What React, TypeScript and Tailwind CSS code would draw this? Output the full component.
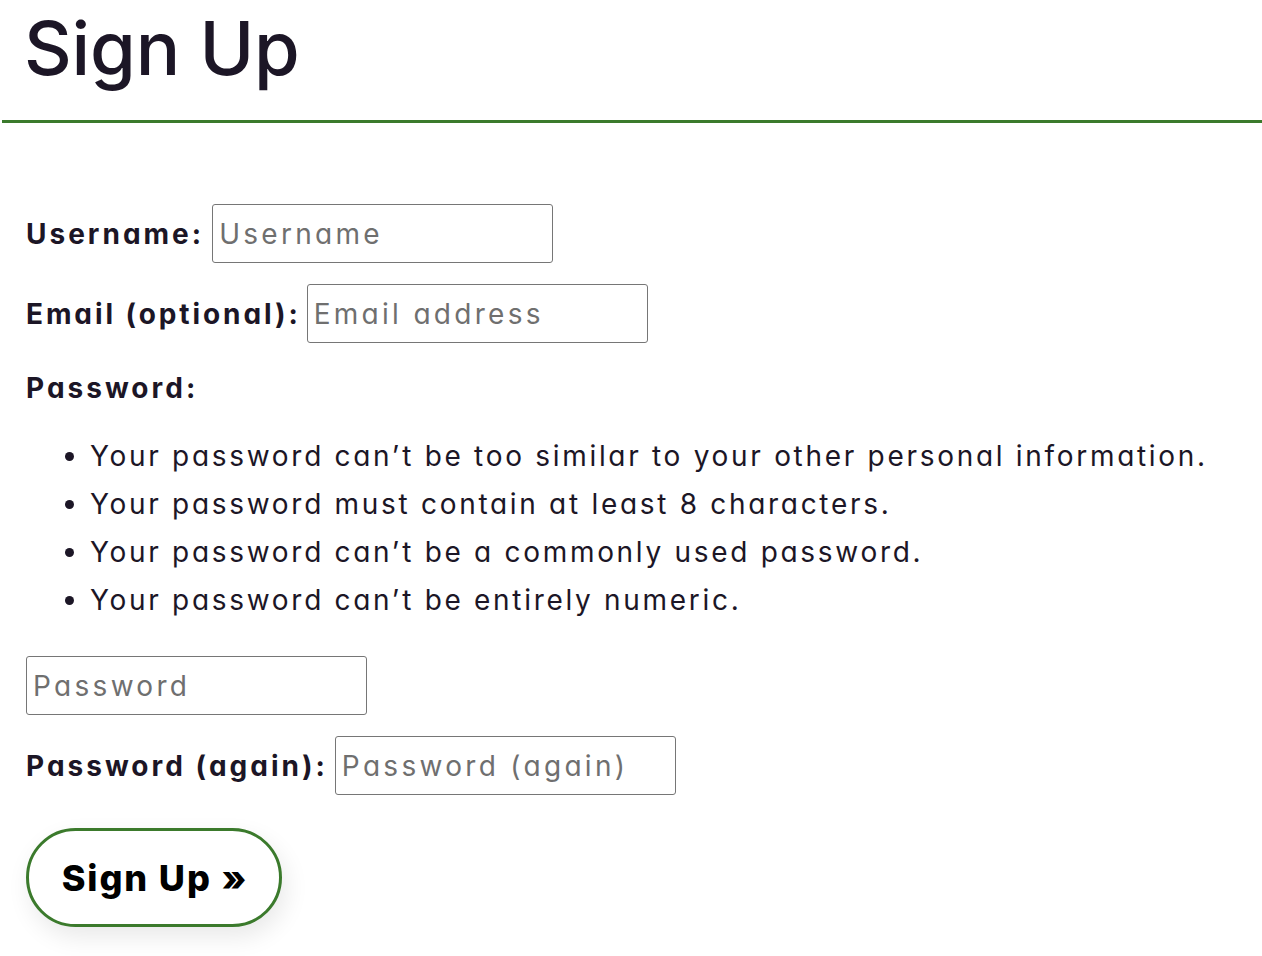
import React from "react";

const font = { fontFamily: "Inter, 'Noto Sans', sans-serif" };

const inputCls =
  "h-[59px] w-[341px] rounded-[3px] border border-[#767676] px-[6px] text-[28px] tracking-[3.3px] placeholder:text-[#6f6f6f] outline-none";

export default function App() {
  return (
    <div
      className="min-h-screen w-full bg-white text-[#1c1626] [font-feature-settings:'cv11']"
      style={font}
    >
      <div className="h-[120px] pl-[24px] pt-[6px]">
        <h1 className="text-[74px] font-medium leading-[84px] tracking-[-0.2px]">Sign Up</h1>
      </div>
      <div className="ml-[2px] h-[3px] bg-[#3b7a2c]" />
      <form className="flex flex-col pl-[26px] pt-[81px]">
        <div className="flex h-[59px] items-center gap-[8px]">
          <label className="text-[28px] font-bold tracking-[3px]">Username:</label>
          <input placeholder="Username" className={inputCls} />
        </div>
        <div className="mt-[21px] flex h-[59px] items-center gap-[6px]">
          <label className="text-[28px] font-bold tracking-[2.9px]">Email (optional):</label>
          <input placeholder="Email address" className={inputCls} />
        </div>
        <div className="mt-[21px] text-[28px] font-bold leading-[48px] tracking-[3px]">Password:</div>
        <ul className="mt-[20px] list-disc pl-[64px] text-[28px] leading-[48px] tracking-[2.7px]">
          <li>Your password can’t be too similar to your other personal information.</li>
          <li>Your password must contain at least 8 characters.</li>
          <li>Your password can’t be a commonly used password.</li>
          <li>Your password can’t be entirely numeric.</li>
        </ul>
        <div className="mt-[32px] flex h-[59px] items-center">
          <input placeholder="Password" type="password" className={inputCls} />
        </div>
        <div className="mt-[21px] flex h-[59px] items-center gap-[7px]">
          <label className="text-[28px] font-bold tracking-[3px]">Password (again):</label>
          <input placeholder="Password (again)" type="password" className={inputCls} />
        </div>
        <div className="mt-[33px]">
          <button
            type="button"
            className="flex h-[99px] w-[256px] items-center justify-center rounded-full border-[3px] border-[#3b7a2c] bg-white pl-[2px] text-[36px] font-extrabold tracking-[1.9px] text-black shadow-[4px_10px_25px_rgba(0,0,0,0.09)]"
          >
            Sign Up »
          </button>
        </div>
      </form>
    </div>
  );
}
